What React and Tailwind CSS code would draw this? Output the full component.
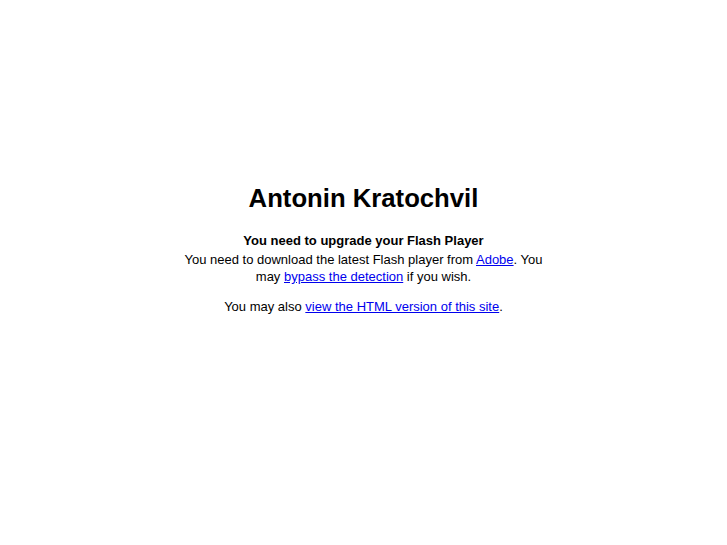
import React from "react";

const App = () => {
  return (
    <div className="min-h-[545px] bg-white text-black font-['Liberation_Sans',Arial,sans-serif]">
      <div className="mx-auto w-[372px] pt-[182px] text-center">
        <h1 className="text-[25.7px] leading-[32px] font-bold">Antonin Kratochvil</h1>
        <div className="mt-[18px] text-[13px] leading-[17px]">
          <p className="font-bold">You need to upgrade your Flash Player</p>
          <p className="mt-[2px]">
            You need to download the latest Flash player from{" "}
            <a href="#" className="text-[#0000ee] underline">Adobe</a>. You may{" "}
            <a href="#" className="text-[#0000ee] underline">bypass the detection</a> if you wish.
          </p>
          <p className="mt-[13px]">
            You may also{" "}
            <a href="#" className="text-[#0000ee] underline">view the HTML version of this site</a>.
          </p>
        </div>
      </div>
    </div>
  );
};

export default App;
